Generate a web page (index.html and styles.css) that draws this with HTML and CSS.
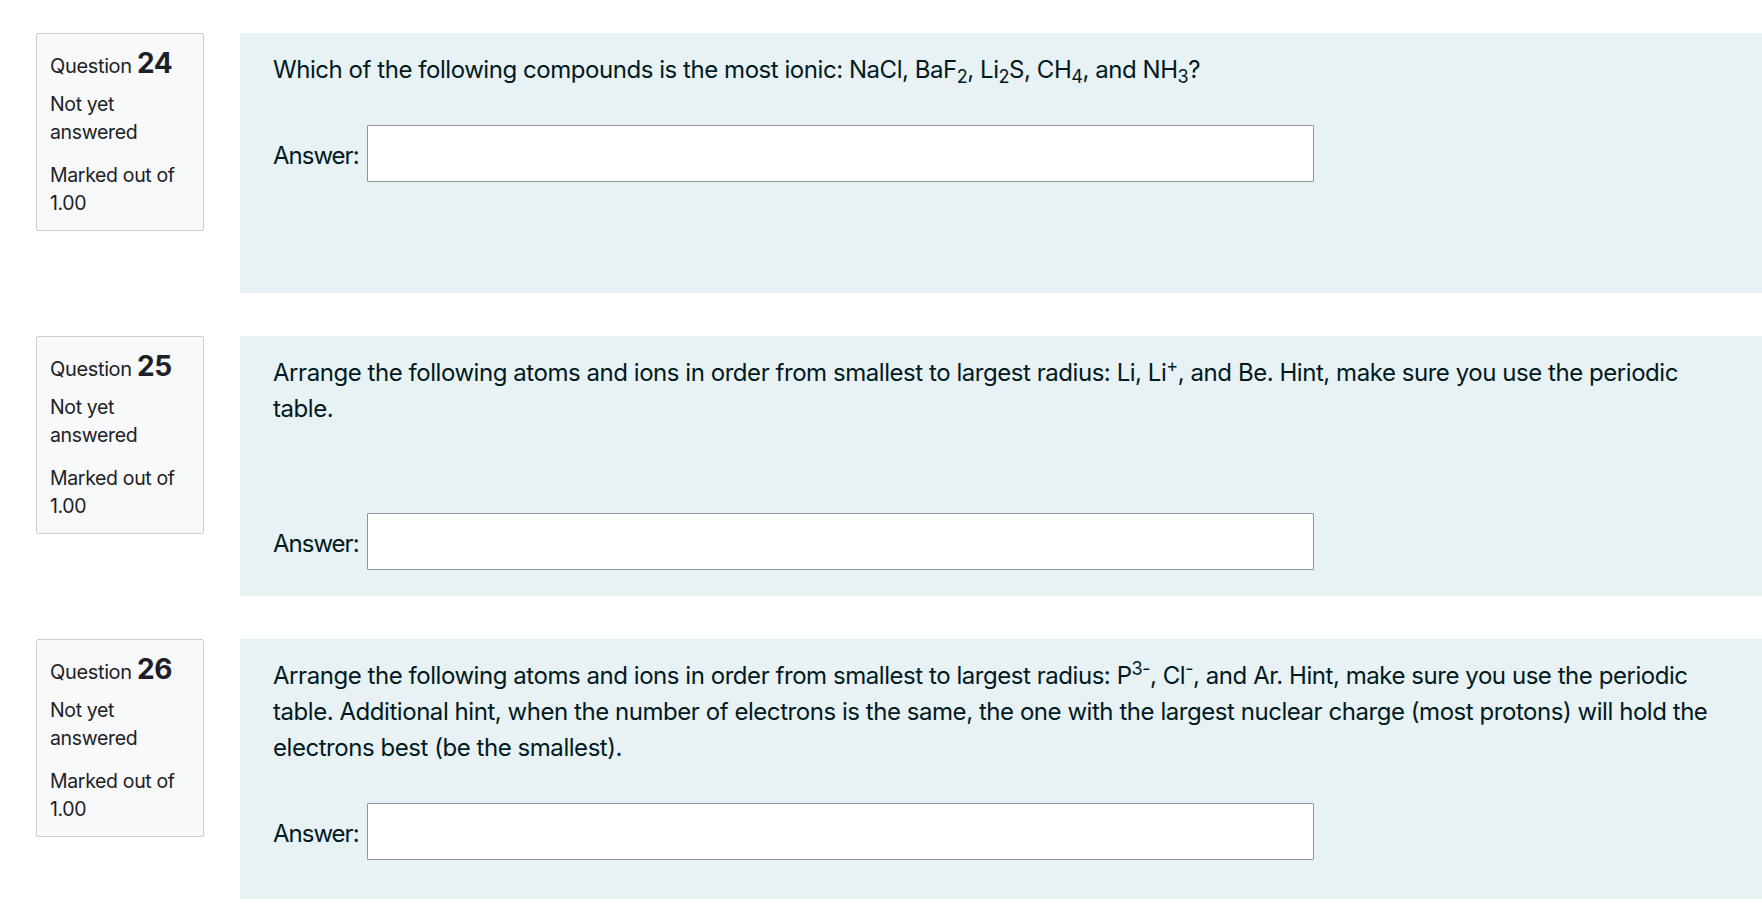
FILE: index.html
```html
<!DOCTYPE html>
<html lang="en">
<head>
<meta charset="utf-8">
<title>Quiz</title>
<link rel="stylesheet" href="styles.css">
</head>
<body>
<div class="page">
  <div class="que">
    <div class="info">
      <h3 class="no">Question <span class="qno">24</span></h3>
      <div class="state">Not yet answered</div>
      <div class="grade">Marked out of 1.00</div>
    </div>
    <div class="content">
      <div class="qtext">Which of the following compounds is the most ionic: NaCl, BaF<sub>2</sub>, Li<sub>2</sub>S, CH<sub>4</sub>, and NH<sub>3</sub>?</div>
      <div class="ablock">
        <label class="alabel" for="a24">Answer:</label>
        <input class="ainput" id="a24" type="text">
      </div>
    </div>
  </div>
  <div class="que">
    <div class="info">
      <h3 class="no">Question <span class="qno">25</span></h3>
      <div class="state">Not yet answered</div>
      <div class="grade">Marked out of 1.00</div>
    </div>
    <div class="content">
      <div class="qtext">Arrange the following atoms and ions in order from smallest to largest radius: Li, Li<sup>+</sup>, and Be. Hint, make sure you use the periodic table.</div>
      <div class="ablock ablock-wide">
        <label class="alabel" for="a25">Answer:</label>
        <input class="ainput" id="a25" type="text">
      </div>
    </div>
  </div>
  <div class="que">
    <div class="info">
      <h3 class="no">Question <span class="qno">26</span></h3>
      <div class="state">Not yet answered</div>
      <div class="grade">Marked out of 1.00</div>
    </div>
    <div class="content">
      <div class="qtext">Arrange the following atoms and ions in order from smallest to largest radius: P<sup>3-</sup>, Cl<sup>-</sup>, and Ar. Hint, make sure you use the periodic table. Additional hint, when the number of electrons is the same, the one with the largest nuclear charge (most protons) will hold the electrons best (be the smallest).</div>
      <div class="ablock">
        <label class="alabel" for="a26">Answer:</label>
        <input class="ainput" id="a26" type="text">
      </div>
    </div>
  </div>
</div>
</body>
</html>
```

FILE: styles.css
```css
html, body {
  margin: 0;
  padding: 0;
  background: #ffffff;
}

body {
  font-family: Inter, "Noto Sans", "Liberation Sans", sans-serif;
  color: #1d2125;
  overflow: hidden;
}

.page {
  padding: 33px 0 0 36px;
}

.que {
  display: flex;
  align-items: flex-start;
  margin-bottom: 43px;
}

.info {
  box-sizing: border-box;
  width: 168px;
  flex: 0 0 168px;
  padding: 14px 12px 13px 13px;
  background: #f8f9fa;
  border: 1px solid #cad0d7;
  border-radius: 2px;
  font-size: 19.5px;
  line-height: 28px;
  letter-spacing: -0.35px;
  color: #1d2125;
}

.no {
  margin: 0 0 6px;
  font-size: 20px;
  line-height: 36px;
  font-weight: 400;
}

.qno {
  font-size: 28px;
  line-height: 1;
  font-weight: 700;
}

.state {
  margin-bottom: 15px;
}

.content {
  box-sizing: border-box;
  flex: 1;
  height: 260px;
  margin-left: 36px;
  padding: 19px 33px 0 33px;
  background: #e8f1f4;
  color: #001a1e;
  font-size: 24px;
  line-height: 36px;
  letter-spacing: -0.45px;
}

.qtext sub,
.qtext sup {
  font-size: 75%;
  line-height: 0;
}

.qtext sub {
  vertical-align: -0.25em;
}

.qtext sup {
  vertical-align: 0.5em;
}

.ablock {
  display: flex;
  align-items: center;
  margin-top: 37px;
}

.ablock-wide {
  margin-top: 86px;
}

.alabel {
  margin-top: 4px;
  padding-right: 8px;
  letter-spacing: -1px;
}

.ainput {
  box-sizing: border-box;
  width: 947px;
  height: 57px;
  margin: 0;
  padding: 6px 12px;
  background: #ffffff;
  border: 1px solid #8f959e;
  border-radius: 1px;
  font: inherit;
  outline: none;
}
```
